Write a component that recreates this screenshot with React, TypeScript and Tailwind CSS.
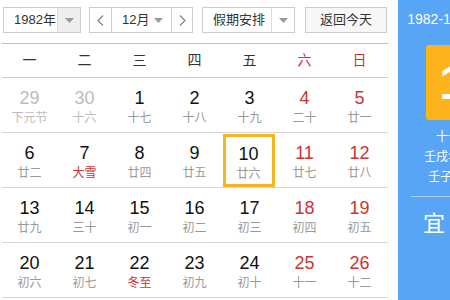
import React from "react";

type Day = { n: number; l: string; prev?: boolean; red?: boolean; lred?: boolean; sel?: boolean };

const rows: Day[][] = [
  [
    { n: 29, l: "下元节", prev: true },
    { n: 30, l: "十六", prev: true },
    { n: 1, l: "十七" },
    { n: 2, l: "十八" },
    { n: 3, l: "十九" },
    { n: 4, l: "二十", red: true },
    { n: 5, l: "廿一", red: true },
  ],
  [
    { n: 6, l: "廿二" },
    { n: 7, l: "大雪", lred: true },
    { n: 8, l: "廿四" },
    { n: 9, l: "廿五" },
    { n: 10, l: "廿六", sel: true },
    { n: 11, l: "廿七", red: true },
    { n: 12, l: "廿八", red: true },
  ],
  [
    { n: 13, l: "廿九" },
    { n: 14, l: "三十" },
    { n: 15, l: "初一" },
    { n: 16, l: "初二" },
    { n: 17, l: "初三" },
    { n: 18, l: "初四", red: true },
    { n: 19, l: "初五", red: true },
  ],
  [
    { n: 20, l: "初六" },
    { n: 21, l: "初七" },
    { n: 22, l: "冬至", lred: true },
    { n: 23, l: "初九" },
    { n: 24, l: "初十" },
    { n: 25, l: "十一", red: true },
    { n: 26, l: "十二", red: true },
  ],
];

const weekdays = ["一", "二", "三", "四", "五", "六", "日"];

const font = { fontFamily: '"Liberation Sans", Arial, "Noto Sans CJK SC", sans-serif' };

function Tri() {
  return (
    <svg width="9" height="5" viewBox="0 0 9 5">
      <path d="M0 0 L9 0 L4.5 5 Z" fill="#999" />
    </svg>
  );
}

function DayCell({ d }: { d: Day }) {
  const numColor = d.prev ? "text-[#bbbbbb]" : d.red ? "text-[#cc3333]" : "text-[#111111]";
  const lunColor = d.prev ? "text-[#bbbbbb]" : d.lred ? "text-[#cc3333]" : "text-[#999999]";
  const inner = (
    <>
      <div className={`text-[18px] leading-[20px] ${numColor}`}>{d.n}</div>
      <div className={`text-[12px] leading-[16px] mt-[2px] ${lunColor}`}>{d.l}</div>
    </>
  );
  return (
    <div className="w-[55px] h-full flex justify-center">
      {d.sel ? (
        <div className="w-[52px] h-[53px] mt-[1px] -ml-[2px] border-[3px] border-[#f5b621] flex flex-col items-center pt-[7px]">
          {inner}
        </div>
      ) : (
        <div className="flex flex-col items-center pt-[10px]">{inner}</div>
      )}
    </div>
  );
}

export default function App() {
  return (
    <div className="w-[450px] h-[300px] overflow-hidden bg-white flex" style={font}>
      <div className="w-[398px] shrink-0 flex flex-col">
        <div className="h-[43px] flex items-start pt-[7px] pl-[3px] text-[13px] text-[#333] whitespace-nowrap">
          <div className="w-[78px] h-[26px] border border-[#cccccc] flex">
            <div className="flex-1 flex items-center pl-[10px] bg-white">1982年</div>
            <div className="w-[23px] bg-[#eeeeee] flex items-center justify-center border-l border-[#dddddd]">
              <Tri />
            </div>
          </div>
          <div className="ml-[8px] w-[104px] h-[26px] border border-[#cccccc] flex">
            <div className="w-[22px] flex items-center justify-center border-r border-[#cccccc]">
              <svg width="7" height="11" viewBox="0 0 7 11">
                <path d="M6 0.5 L1 5.5 L6 10.5" fill="none" stroke="#888" strokeWidth="1.3" />
              </svg>
            </div>
            <div className="flex-1 flex items-center pl-[10px] justify-between pr-[8px]">
              <span>12月</span>
              <Tri />
            </div>
            <div className="w-[21px] flex items-center justify-center border-l border-[#cccccc]">
              <svg width="7" height="11" viewBox="0 0 7 11">
                <path d="M1 0.5 L6 5.5 L1 10.5" fill="none" stroke="#888" strokeWidth="1.3" />
              </svg>
            </div>
          </div>
          <div className="ml-[9px] w-[93px] h-[26px] border border-[#cccccc] flex">
            <div className="flex-1 flex items-center pl-[10px]">假期安排</div>
            <div className="w-[23px] flex items-center justify-center border-l border-[#dddddd]">
              <Tri />
            </div>
          </div>
          <div className="ml-[10px] w-[82px] h-[26px] border border-[#cccccc] bg-[#f7f7f7] flex items-center justify-center">
            返回今天
          </div>
        </div>
        <div className="ml-[2px] w-[386px]">
          <div className="h-[35px] border-t border-[#a3c6e6] border-b border-b-[#cccccc] flex">
            {weekdays.map((w, i) => (
              <div
                key={w}
                className={`w-[55px] flex items-center justify-center text-[14px] ${i >= 5 ? "text-[#cc3333]" : "text-[#333333]"}`}
              >
                {w}
              </div>
            ))}
          </div>
          {rows.map((r, i) => (
            <div key={i} className="h-[55px] flex border-b border-[#d5d5d5]">
              {r.map((d) => (
                <DayCell key={d.n + "-" + i} d={d} />
              ))}
            </div>
          ))}
        </div>
      </div>
      <div className="w-[136px] shrink-0 h-[300px] bg-[#58a5f6] flex flex-col items-center text-white">
        <div className="mt-[11px] text-[14px] leading-[16px]">1982-12-10 星期五</div>
        <div className="mt-[18px] w-[80px] h-[75px] bg-[#fcb41a] rounded-[3px] flex items-center justify-center text-[48px] font-bold leading-none">
          10
        </div>
        <div className="mt-[8px] text-[12px] leading-[18px]">十一月廿六</div>
        <div className="mt-[2px] text-[12px] leading-[18px]">壬戌年【狗年】</div>
        <div className="mt-[2px] text-[12px] leading-[18px]">壬子月 壬寅日</div>
        <div className="mt-[10px] w-[110px] h-[1px] bg-[#a9cff9]" />
        <div className="self-start ml-[25px] mt-[14px] flex items-center gap-[8px]">
          <span className="text-[22px] leading-[26px]">宜</span>
          <span className="text-[12px] leading-[16px]">祭祀 祈福</span>
        </div>
      </div>
    </div>
  );
}
